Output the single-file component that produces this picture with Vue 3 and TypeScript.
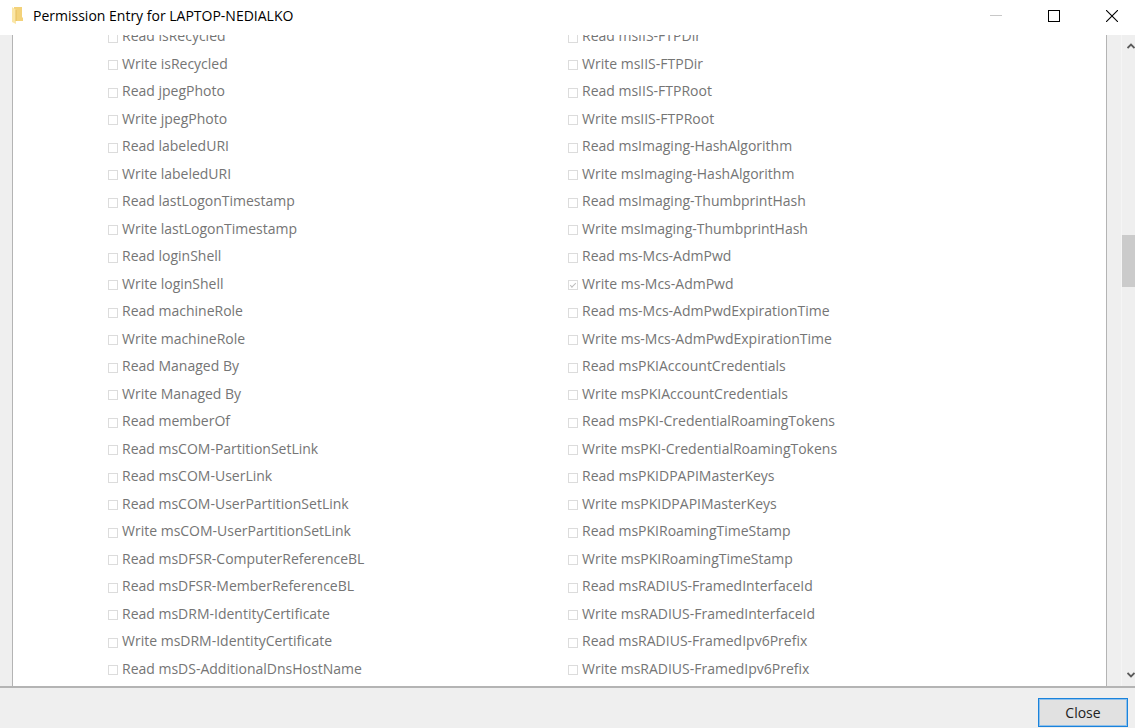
<script setup lang="ts">
import { ref } from 'vue'

interface Permission {
  id: string
  label: string
  granted: boolean
}

const granted = new Set<string>(['Write ms-Mcs-AdmPwd'])

const toColumn = (prefix: string, labels: string[]): Permission[] =>
  labels.map((label, i) => ({ id: `${prefix}-${i}`, label, granted: granted.has(label) }))

const columns = ref<Permission[][]>([
  toColumn('left', [
    'Read isRecycled',
    'Write isRecycled',
    'Read jpegPhoto',
    'Write jpegPhoto',
    'Read labeledURI',
    'Write labeledURI',
    'Read lastLogonTimestamp',
    'Write lastLogonTimestamp',
    'Read loginShell',
    'Write loginShell',
    'Read machineRole',
    'Write machineRole',
    'Read Managed By',
    'Write Managed By',
    'Read memberOf',
    'Read msCOM-PartitionSetLink',
    'Read msCOM-UserLink',
    'Read msCOM-UserPartitionSetLink',
    'Write msCOM-UserPartitionSetLink',
    'Read msDFSR-ComputerReferenceBL',
    'Read msDFSR-MemberReferenceBL',
    'Read msDRM-IdentityCertificate',
    'Write msDRM-IdentityCertificate',
    'Read msDS-AdditionalDnsHostName',
  ]),
  toColumn('right', [
    'Read msIIS-FTPDir',
    'Write msIIS-FTPDir',
    'Read msIIS-FTPRoot',
    'Write msIIS-FTPRoot',
    'Read msImaging-HashAlgorithm',
    'Write msImaging-HashAlgorithm',
    'Read msImaging-ThumbprintHash',
    'Write msImaging-ThumbprintHash',
    'Read ms-Mcs-AdmPwd',
    'Write ms-Mcs-AdmPwd',
    'Read ms-Mcs-AdmPwdExpirationTime',
    'Write ms-Mcs-AdmPwdExpirationTime',
    'Read msPKIAccountCredentials',
    'Write msPKIAccountCredentials',
    'Read msPKI-CredentialRoamingTokens',
    'Write msPKI-CredentialRoamingTokens',
    'Read msPKIDPAPIMasterKeys',
    'Write msPKIDPAPIMasterKeys',
    'Read msPKIRoamingTimeStamp',
    'Write msPKIRoamingTimeStamp',
    'Read msRADIUS-FramedInterfaceId',
    'Write msRADIUS-FramedInterfaceId',
    'Read msRADIUS-FramedIpv6Prefix',
    'Write msRADIUS-FramedIpv6Prefix',
  ]),
])
</script>

<template>
  <div class="window">
    <header class="titlebar">
      <svg class="folder" width="12" height="18" viewBox="0 0 12 18" aria-hidden="true">
        <path d="M2 0H10V10L11 11V14H2Z" fill="#f3d27a" />
        <path d="M0 0L4 3V17L0 15Z" fill="#fbe6a6" />
        <path d="M4 3V14" stroke="#e5bd5c" stroke-width="1" />
      </svg>
      <h1 class="title">Permission Entry for LAPTOP-NEDIALKO</h1>
      <div class="controls">
        <button type="button" class="control" aria-label="Minimize" disabled>
          <svg width="12" height="12" viewBox="0 0 12 12"><path d="M0 5.5H12" stroke="#c8c8c8" /></svg>
        </button>
        <button type="button" class="control" aria-label="Maximize">
          <svg width="12" height="12" viewBox="0 0 12 12"><rect x=".5" y=".5" width="11" height="11" fill="none" stroke="#000" /></svg>
        </button>
        <button type="button" class="control" aria-label="Close window">
          <svg width="12" height="12" viewBox="0 0 12 12"><path d="M0 0L12 12M12 0L0 12" stroke="#000" stroke-width="1.1" /></svg>
        </button>
      </div>
    </header>

    <main class="body">
      <section class="pane" aria-label="Permissions">
        <ul v-for="(column, c) in columns" :key="c" class="column">
          <li v-for="item in column" :key="item.id" class="row">
            <input :id="item.id" v-model="item.granted" type="checkbox" class="check" disabled />
            <label :for="item.id" class="label">{{ item.label }}</label>
          </li>
        </ul>
      </section>
      <div class="scrollbar">
        <button type="button" class="arrow" aria-label="Scroll up">
          <svg width="8" height="6" viewBox="0 0 8 6"><path d="M.5 5L4 1.5L7.5 5" fill="none" stroke="#5a5a5a" stroke-width="1.8" /></svg>
        </button>
        <div class="track">
          <div class="before"></div>
          <div class="thumb"></div>
          <div class="after"></div>
        </div>
        <button type="button" class="arrow" aria-label="Scroll down">
          <svg width="8" height="6" viewBox="0 0 8 6"><path d="M.5 1L4 4.5L7.5 1" fill="none" stroke="#5a5a5a" stroke-width="1.8" /></svg>
        </button>
      </div>
    </main>

    <footer class="footer">
      <button type="button" class="close">Close</button>
    </footer>
  </div>
</template>

<style>
body {
  margin: 0;
}
</style>

<style scoped>
.window {
  display: flex;
  flex-direction: column;
  height: 100vh;
  overflow: hidden;
  background: #fff;
  font-family: "Open Sans", "Noto Sans", sans-serif;
  font-size: 14px;
}
.titlebar {
  display: flex;
  align-items: center;
  flex: none;
  height: 31px;
  padding: 0 0 4px 12px;
}
.folder {
  flex: none;
}
.title {
  flex: 1;
  margin: 0 0 0 9px;
  font-size: 14px;
  font-weight: 400;
  line-height: 20px;
  color: #000;
  white-space: nowrap;
}
.controls {
  display: flex;
  padding-right: 17px;
  gap: 46px;
}
.control {
  display: flex;
  align-items: center;
  justify-content: center;
  width: 12px;
  height: 31px;
  padding: 0;
  border: 0;
  background: transparent;
}
.body {
  display: flex;
  flex: 1;
  min-height: 0;
  background: #efefef;
}
.pane {
  display: grid;
  grid-template-columns: 460px 1fr;
  align-content: end;
  flex: 1;
  min-width: 0;
  margin-left: 12px;
  padding: 0 0 4px 95px;
  border: solid #b4b4b4;
  border-width: 0 1px;
  background: #fff;
  overflow: hidden;
}
.column {
  margin: 0;
  padding: 0;
  list-style: none;
}
.row {
  display: flex;
  align-items: center;
  gap: 4px;
  height: 28px;
}
.row:nth-child(even) {
  height: 27px;
}
.check {
  appearance: none;
  flex: none;
  width: 10px;
  height: 10px;
  margin: 3px 0 0;
  border: 1px solid #dcdcdc;
  background: #fff;
}
.check:checked::before {
  content: "";
  display: block;
  width: 5px;
  height: 2px;
  margin: 2px 0 0 1px;
  border: solid #bdbdbd;
  border-width: 0 0 1px 1px;
  transform: rotate(-45deg);
}
.label {
  line-height: 20px;
  color: #757575;
  white-space: nowrap;
}
.scrollbar {
  display: flex;
  flex-direction: column;
  width: 13px;
  margin-left: 14px;
  border-left: 1px solid #f5f5f5;
}
.arrow {
  display: flex;
  align-items: center;
  justify-content: flex-end;
  flex: none;
  height: 22px;
  padding: 0;
  border: 0;
  background: transparent;
}
.track {
  display: flex;
  flex-direction: column;
  flex: 1;
}
.before {
  flex: 178;
}
.thumb {
  height: 52px;
  background: #cbcbcb;
}
.after {
  flex: 377;
}
.footer {
  display: flex;
  justify-content: flex-end;
  flex: none;
  padding: 10px 7px 1px;
  border-top: 2px solid #b4b4b4;
  background: #efefef;
}
.close {
  width: 90px;
  height: 29px;
  padding: 0;
  border: 1px solid #1a83dc;
  outline: 1px solid #8fc0ea;
  outline-offset: -2px;
  background: #e1e1e1;
  font-family: inherit;
  font-size: 14px;
  color: #222;
}
</style>
